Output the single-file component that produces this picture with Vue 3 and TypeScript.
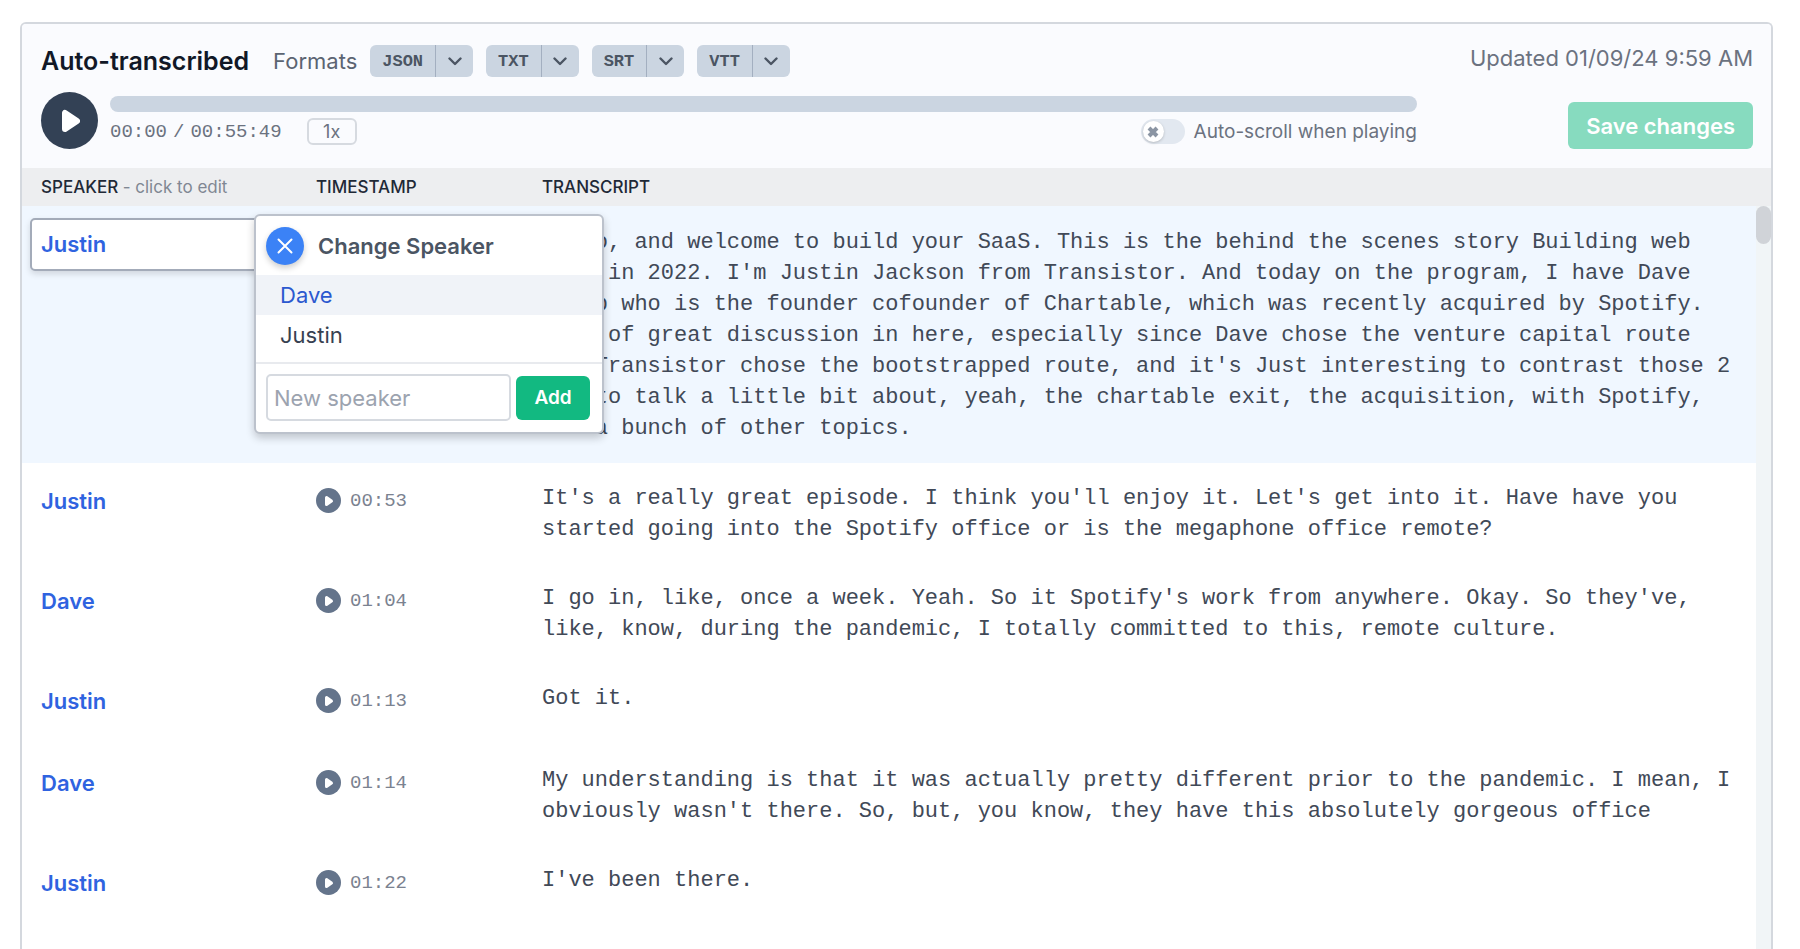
<script setup lang="ts">
import { ref } from 'vue'

interface Segment {
  speaker: string
  time: string
  text: string
}

const formats: string[] = ['JSON', 'TXT', 'SRT', 'VTT']
const speakers: string[] = ['Dave', 'Justin']
const highlighted = ref('Dave')
const newSpeaker = ref('')
const autoScroll = ref(false)

const segments: Segment[] = [
  {
    speaker: 'Justin',
    time: '00:00',
    text: "Hello, and welcome to build your SaaS. This is the behind the scenes story Building web apps in 2022. I'm Justin Jackson from Transistor. And today on the program, I have Dave Zorob who is the founder cofounder of Chartable, which was recently acquired by Spotify. Lots of great discussion in here, especially since Dave chose the venture capital route and Transistor chose the bootstrapped route, and it's Just interesting to contrast those 2 and to talk a little bit about, yeah, the chartable exit, the acquisition, with Spotify, and a bunch of other topics.",
  },
  {
    speaker: 'Justin',
    time: '00:53',
    text: "It's a really great episode. I think you'll enjoy it. Let's get into it. Have have you started going into the Spotify office or is the megaphone office remote?",
  },
  {
    speaker: 'Dave',
    time: '01:04',
    text: "I go in, like, once a week. Yeah. So it Spotify's work from anywhere. Okay. So they've, like, know, during the pandemic, I totally committed to this, remote culture.",
  },
  { speaker: 'Justin', time: '01:13', text: 'Got it.' },
  {
    speaker: 'Dave',
    time: '01:14',
    text: "My understanding is that it was actually pretty different prior to the pandemic. I mean, I obviously wasn't there. So, but, you know, they have this absolutely gorgeous office",
  },
  { speaker: 'Justin', time: '01:22', text: "I've been there." },
]
</script>

<template>
  <main class="page">
    <section class="panel">
      <header class="toolbar">
        <div class="player-side">
          <div class="title-row">
            <h1>Auto-transcribed</h1>
            <span class="formats-label">Formats</span>
            <div class="formats">
              <div v-for="f in formats" :key="f" class="split">
                <button type="button" class="split-main">{{ f }}</button>
                <button type="button" class="split-more" :aria-label="`${f} options`">
                  <svg viewBox="0 0 14 9" width="14" height="9"><path d="M1.500 1.500 7 7l5.500-5.500" /></svg>
                </button>
              </div>
            </div>
          </div>
          <div class="player">
            <button type="button" class="play" aria-label="Play">
              <svg viewBox="0 0 20 24" width="20" height="24"><path d="M5 4v16l12-8z" /></svg>
            </button>
            <div class="track-side">
              <div class="track"></div>
              <div class="controls">
                <div class="clock"><span>00:00</span><span>/</span><span>00:55:49</span></div>
                <button type="button" class="rate">1x</button>
                <label class="auto">
                  <input v-model="autoScroll" type="checkbox" role="switch" />
                  <span class="switch">
                    <span class="knob">
                      <svg viewBox="0 0 12 12" width="12" height="12"><path d="m2 2 8 8m0-8-8 8" /></svg>
                    </span>
                  </span>
                  Auto-scroll when playing
                </label>
              </div>
            </div>
          </div>
        </div>
        <div class="save-side">
          <span class="updated">Updated 01/09/24 9:59 AM</span>
          <button type="button" class="save">Save changes</button>
        </div>
      </header>

      <div class="columns head">
        <span>SPEAKER <small>- click to edit</small></span>
        <span>TIMESTAMP</span>
        <span>TRANSCRIPT</span>
      </div>

      <div class="scroller">
        <div class="rows">
          <article v-for="(s, i) in segments" :key="s.time" class="columns row" :class="{ active: i === 0 }">
            <div class="speaker-cell">
              <button type="button" class="speaker">{{ s.speaker }}</button>
              <div v-if="i === 0" class="popover">
                <div class="pop-head">
                  <button type="button" class="close" aria-label="Close">
                    <svg viewBox="0 0 16 16" width="16" height="16"><path d="m1.500 1.500 13 13m0-13-13 13" /></svg>
                  </button>
                  <h2>Change Speaker</h2>
                </div>
                <div class="options">
                  <button
                    v-for="name in speakers"
                    :key="name"
                    type="button"
                    class="option"
                    :class="{ on: name === highlighted }"
                    @mouseenter="highlighted = name"
                  >{{ name }}</button>
                </div>
                <form class="adder" @submit.prevent>
                  <input v-model="newSpeaker" type="text" placeholder="New speaker" aria-label="New speaker" />
                  <button type="submit">Add</button>
                </form>
              </div>
            </div>
            <button type="button" class="stamp">
              <span class="dot">
                <svg viewBox="0 0 10 12" width="10" height="12"><path d="M2.500 2.500v7l5-3.500z" /></svg>
              </span>
              {{ s.time }}
            </button>
            <p class="text">{{ s.text }}</p>
          </article>
        </div>
        <div class="bar"><div class="thumb"></div></div>
      </div>
    </section>
  </main>
</template>

<style>
body {
  margin: 0;
  background: #fff;
}
</style>

<style scoped>
* {
  box-sizing: border-box;
}
button,
input {
  font: inherit;
  color: inherit;
  border: 0;
  background: none;
  padding: 0;
  margin: 0;
}
h1,
h2,
p {
  margin: 0;
}
svg {
  display: block;
  fill: none;
  stroke: currentColor;
  stroke-linecap: round;
  stroke-linejoin: round;
}
.page {
  height: 100vh;
  overflow: hidden;
  padding: 22px 27px 0 20px;
  font-family: Inter, "Liberation Sans", sans-serif;
  color: #374151;
}
.panel {
  display: flex;
  flex-direction: column;
  height: 100%;
  border: 2px solid #d4d8de;
  border-bottom: 0;
  border-radius: 6px 6px 0 0;
  overflow: hidden;
}
.toolbar {
  display: flex;
  padding: 20px 18px 0 19px;
  height: 144px;
  background: #fafbfe;
}
.player-side {
  flex: 1;
}
.title-row {
  display: flex;
  align-items: center;
  height: 34px;
}
h1 {
  font-size: 25px;
  font-weight: 600;
  color: #111827;
}
.formats-label {
  margin: 0 13px 0 24px;
  font-size: 22px;
  color: #5b6472;
}
.formats {
  display: flex;
  gap: 13px;
}
.split {
  display: flex;
  height: 32px;
  border-radius: 6px;
  background: #cbd5e1;
  color: #4b5563;
}
.split-main {
  padding: 0 12px;
  font: bold 17px "Liberation Mono", monospace;
}
.split-more {
  display: grid;
  place-items: center;
  width: 38px;
  border-left: 1px solid #a3afc0;
}
.split-more svg {
  stroke-width: 2.4;
}
.player {
  display: flex;
  gap: 12px;
  margin-top: 14px;
}
.play {
  display: grid;
  place-items: center;
  width: 57px;
  height: 57px;
  border-radius: 50%;
  background: #334155;
  color: #fff;
}
.play svg {
  fill: #fff;
  stroke-width: 6;
}
.track-side {
  flex: 1;
  padding-top: 4px;
}
.track {
  height: 16px;
  border-radius: 8px;
  background: #cbd5e1;
}
.controls {
  display: flex;
  align-items: center;
  height: 27px;
  margin-top: 6px;
  color: #6b7280;
}
.clock {
  display: flex;
  gap: 6px;
  font: 19px "Liberation Mono", monospace;
}
.rate {
  width: 50px;
  height: 27px;
  margin-left: 25px;
  border: 2px solid #d6dae0;
  border-radius: 6px;
  font-size: 18px;
  line-height: 20px;
}
.auto {
  display: flex;
  align-items: center;
  margin-left: auto;
  font-size: 19px;
}
.auto input {
  position: absolute;
  opacity: 0;
}
.switch {
  width: 44px;
  height: 25px;
  margin-right: 9px;
  padding: 2px;
  border-radius: 13px;
  background: #e2e8f0;
}
.knob {
  display: grid;
  place-items: center;
  width: 21px;
  height: 21px;
  border-radius: 50%;
  background: #fff;
  box-shadow: 0 1px 3px #0003;
  color: #8b95a3;
}
.knob svg {
  stroke-width: 4;
  stroke-linecap: butt;
}
.save-side {
  display: flex;
  flex: 0 0 336px;
  flex-direction: column;
  align-items: flex-end;
}
.updated {
  font-size: 22px;
  line-height: 28px;
  color: #6b7280;
}
.save {
  height: 47px;
  margin-top: 30px;
  padding: 0 18px;
  border-radius: 6px;
  background: #87dbbf;
  color: #fff;
  font-size: 22px;
  font-weight: 600;
}
.columns {
  display: grid;
  grid-template-columns: 275px 226px 1fr;
  padding: 0 19px;
}
.head {
  align-items: center;
  height: 38px;
  flex: none;
  background: #edeef0;
  color: #1f2937;
  font-size: 17px;
  font-weight: 500;
}
.head small {
  font-size: 17px;
  font-weight: 400;
  color: #808793;
}
.scroller {
  display: flex;
  flex: 1;
  min-height: 0;
}
.rows {
  flex: 1;
}
.row {
  min-height: 82px;
  padding-top: 19px;
  padding-bottom: 18px;
  align-items: start;
}
.row.active {
  padding-top: 20px;
  padding-bottom: 19px;
  background: #f0f7ff;
}
.speaker-cell {
  position: relative;
}
.speaker {
  height: 38px;
  font-size: 22px;
  font-weight: 600;
  color: #2f63e0;
}
.active .speaker {
  width: 100%;
  height: 53px;
  margin: -8px 0 0 -11px;
  padding: 0 0 2px 9px;
  border: 2px solid #a3abb9;
  border-radius: 5px;
  background: #fff;
  box-shadow: 0 3px 6px #0002;
  text-align: left;
}
.popover {
  position: absolute;
  z-index: 1;
  top: -12px;
  left: 213px;
  width: 350px;
  border: 2px solid #bcc2cc;
  border-radius: 6px;
  background: #fff;
  box-shadow: 0 4px 8px #0003;
}
.pop-head {
  display: flex;
  align-items: center;
  gap: 14px;
  height: 59px;
  padding-left: 10px;
}
.close {
  display: grid;
  place-items: center;
  width: 38px;
  height: 38px;
  border-radius: 50%;
  background: #3b82f6;
  color: #fff;
  box-shadow: 0 3px 6px #0003;
}
.close svg {
  stroke-width: 2;
}
h2 {
  font-size: 22px;
  font-weight: 600;
  color: #4b5563;
}
.options {
  padding-bottom: 7px;
  border-bottom: 2px solid #e8eaee;
}
.option {
  display: block;
  width: 100%;
  height: 40px;
  padding-left: 24px;
  font-size: 22px;
  text-align: left;
}
.option.on {
  background: #f0f3f8;
  color: #2b58cf;
}
.adder {
  display: flex;
  align-items: center;
  gap: 5px;
  padding: 10px 12px 11px 10px;
}
.adder input {
  flex: 1;
  min-width: 0;
  height: 47px;
  padding: 0 6px;
  border: 2px solid #d6dae0;
  border-radius: 5px;
  font-size: 22px;
}
.adder input::placeholder {
  color: #9ca3af;
}
.adder button {
  width: 74px;
  height: 44px;
  border-radius: 6px;
  background: #12b981;
  color: #fff;
  font-size: 19px;
  font-weight: 600;
}
.stamp {
  display: flex;
  align-items: center;
  gap: 9px;
  height: 37px;
  font: 19px "Liberation Mono", monospace;
  color: #7b8290;
}
.dot {
  display: grid;
  place-items: center;
  width: 25px;
  height: 25px;
  border-radius: 50%;
  background: #64748b;
  color: #fff;
}
.dot svg {
  fill: #fff;
  stroke-width: 3;
}
.text {
  padding-top: 1px;
  font: 22px/31px "Liberation Mono", monospace;
  color: #414957;
}
.bar {
  width: 15px;
  background: #f1f5f7;
}
.thumb {
  height: 38px;
  border-radius: 8px;
  background: #d0d3d8;
}
</style>
